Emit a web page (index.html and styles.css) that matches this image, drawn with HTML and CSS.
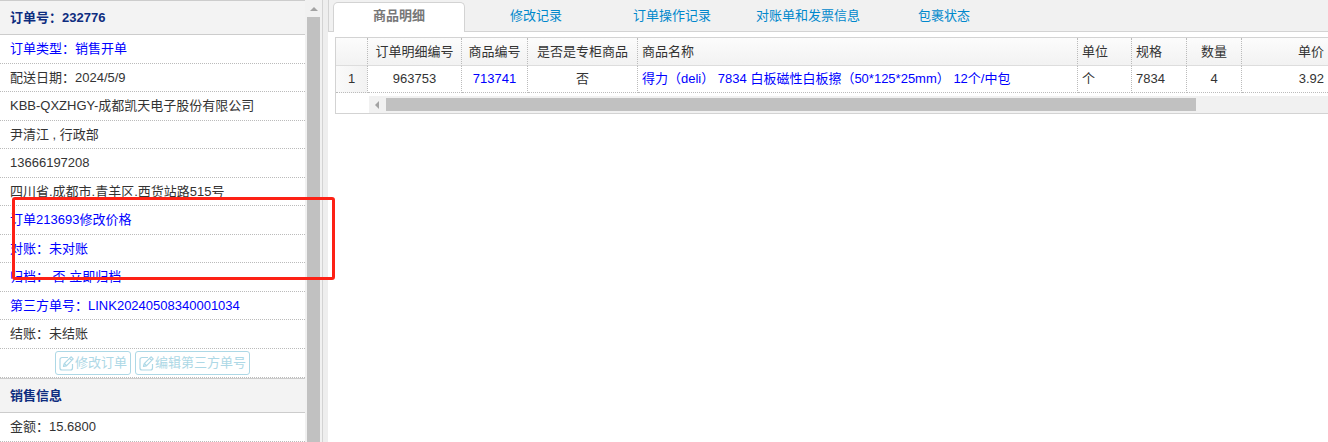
FILE: index.html
```html
<!DOCTYPE html>
<html lang="zh-CN">
<head>
<meta charset="utf-8">
<title>订单 232776</title>
<link rel="stylesheet" href="styles.css">
</head>
<body>
<svg class="sprite" aria-hidden="true">
  <symbol id="edit" viewBox="0 0 15 15">
    <path d="M9 1.500H3a2 2 0 0 0-2 2v8.500a2 2 0 0 0 2 2h8.500a2 2 0 0 0 2-2V8M4.500 10.500l.7-2.800 6.800-6.900 2.200 2.100-6.800 6.900zM5.600 7.700l1.900 1.900M10.600 2.300l2.100 2.100" fill="none" stroke="currentColor" stroke-width="1.200" stroke-linejoin="round"/>
  </symbol>
</svg>
<div class="layout">
  <aside class="side">
    <div class="side-content">
      <h2 class="side-title">订单号：232776</h2>
      <ul class="info">
        <li><a href="#">订单类型：销售开单</a></li>
        <li>配送日期：2024/5/9</li>
        <li>KBB-QXZHGY-成都凯天电子股份有限公司</li>
        <li>尹清江 , 行政部</li>
        <li>13666197208</li>
        <li>四川省.成都市.青羊区.西货站路515号</li>
        <li><a href="#">订单213693修改价格</a></li>
        <li><a href="#">对账：未对账</a></li>
        <li><a href="#">归档： 否</a> <a href="#">立即归档</a></li>
        <li><a href="#">第三方单号：LINK20240508340001034</a></li>
        <li>结账：未结账</li>
        <li class="actions">
          <button type="button" class="btn"><svg class="icon"><use href="#edit"/></svg>修改订单</button>
          <button type="button" class="btn"><svg class="icon"><use href="#edit"/></svg>编辑第三方单号</button>
        </li>
      </ul>
      <h2 class="side-title">销售信息</h2>
      <ul class="info">
        <li>金额：15.6800</li>
      </ul>
    </div>
    <div class="vbar"><span class="arrow-up"></span><span class="vthumb"></span></div>
  </aside>
  <div class="splitter"></div>
  <main class="main">
    <nav class="tabs">
      <a href="#" class="tab active">商品明细</a>
      <a href="#" class="tab">修改记录</a>
      <a href="#" class="tab">订单操作记录</a>
      <a href="#" class="tab">对账单和发票信息</a>
      <a href="#" class="tab">包裹状态</a>
    </nav>
    <section class="grid">
      <table class="items">
        <colgroup>
          <col class="c-row"><col class="c-id"><col class="c-sku"><col class="c-flag"><col><col class="c-unit"><col class="c-spec"><col class="c-qty"><col class="c-price">
        </colgroup>
        <thead>
          <tr>
            <th></th><th>订单明细编号</th><th>商品编号</th><th>是否是专柜商品</th><th class="left">商品名称</th><th class="left">单位</th><th class="left">规格</th><th>数量</th><th class="right">单价</th>
          </tr>
        </thead>
        <tbody>
          <tr>
            <td class="num">1</td><td>963753</td><td><a href="#">713741</a></td><td>否</td><td class="left"><a href="#">得力（deli） 7834 白板磁性白板擦（50*125*25mm） 12个/中包</a></td><td class="left">个</td><td class="left">7834</td><td>4</td><td class="right">3.92</td>
          </tr>
        </tbody>
      </table>
      <div class="hbar"><span class="arrow-left"></span><span class="hthumb"></span></div>
    </section>
  </main>
</div>
<div class="highlight"></div>
</body>
</html>
```
FILE: styles.css
```css
* {
  box-sizing: border-box;
}

body {
  margin: 0;
  color: #333;
  background: #fff;
  font: 13px/20px "Liberation Sans", "Noto Sans CJK SC", sans-serif;
}

a {
  color: #00f;
  text-decoration: none;
}

.sprite {
  position: absolute;
  width: 0;
  height: 0;
}

.layout {
  display: flex;
  height: 100vh;
  overflow: hidden;
}

/* Order summary */
.side {
  display: flex;
  flex: 0 0 323px;
  border-right: 1px solid #d3d3d3;
}

.side-content {
  flex: 1;
  overflow: hidden;
}

.side-title {
  margin: 0;
  padding: 7px 10px 6px;
  border: solid #ccc;
  border-width: 1px 0;
  color: #0e2d7f;
  background: #f3f3f3;
  font-size: 13px;
  line-height: 20px;
}

.info {
  margin: 0;
  padding: 0;
  list-style: none;
}

.info li {
  height: 29px;
  padding: 4px 10px 3px;
  border-bottom: 1px dotted #bbb;
  white-space: nowrap;
}

.info li:nth-child(even) {
  height: 28px;
}

.info .actions,
.info .actions:nth-child(even) {
  display: flex;
  justify-content: center;
  gap: 4px;
  height: 29px;
  padding: 2px 0;
}

.btn {
  display: flex;
  align-items: center;
  height: 24px;
  padding: 0 3px;
  border: 1px solid #add8e6;
  border-radius: 3px;
  color: #add8e6;
  background: #fff;
  font: inherit;
}

.icon {
  width: 15px;
  height: 15px;
  margin-right: 1px;
}

.vbar {
  display: flex;
  flex: 0 0 17px;
  flex-direction: column;
  align-items: center;
  padding: 7px 2px 0;
  background: #f1f1f1;
}

.arrow-up {
  margin-bottom: 6px;
  border: 4px solid transparent;
  border-top: 0;
  border-bottom-color: #a3a3a3;
}

.vthumb {
  flex: 1;
  width: 13px;
  background: #c1c1c1;
}

.splitter {
  flex: 0 0 5px;
  background: #eee;
}

/* Tabs and item grid */
.main {
  flex: 1;
  min-width: 0;
}

.tabs {
  display: flex;
  gap: 4px;
  height: 32px;
  padding: 2px 5px 0;
  border: solid #d3d3d3;
  border-width: 0 0 1px 1px;
  background: #f1f1f1;
}

.tab {
  flex: 0 0 132px;
  padding: 4px 0;
  color: #08c;
  text-align: center;
}

.tab.active {
  height: 30px;
  margin: 0 1px 0 -1px;
  padding-top: 3px;
  border: 1px solid #d3d3d3;
  border-bottom: 0;
  border-radius: 5px 5px 0 0;
  color: #777;
  background: #fff;
  font-weight: bold;
}

.grid {
  margin: 5px 0 0 7px;
  border: solid #d3d3d3;
  border-width: 1px 0 1px 1px;
}

.items {
  width: 100%;
  border-spacing: 0;
  table-layout: fixed;
}

.c-row { width: 32px; }
.c-id { width: 94px; }
.c-sku { width: 66px; }
.c-flag { width: 110px; }
.c-unit { width: 54px; }
.c-spec,
.c-qty { width: 55px; }
.c-price { width: 86px; }

.items th,
.items td {
  padding: 3px 4px;
  border-right: 1px dotted #bbb;
  border-bottom: 1px dotted #bbb;
  font-weight: normal;
  text-align: center;
  white-space: nowrap;
}

.items th {
  padding: 4px 4px 3px;
  border-bottom: 1px solid #ddd;
  background: linear-gradient(#fcfcfc, #f2f2f2);
}

.items .num {
  background: linear-gradient(90deg, #fafafa, #f2f2f2);
}

.items .left {
  text-align: left;
}

.items .right {
  border-right: 0;
  text-align: right;
}

.hbar {
  display: flex;
  align-items: center;
  height: 17px;
  margin: 3px 0 0 33px;
  padding-left: 6px;
  background: #f1f1f1;
}

.arrow-left {
  margin-right: 7px;
  border: 4px solid transparent;
  border-left: 0;
  border-right-color: #a3a3a3;
}

.hthumb {
  flex: 0 0 auto;
  width: 85%;
  height: 13px;
  background: #c1c1c1;
}

/* Callout frame over the order note */
.highlight {
  position: absolute;
  top: 197px;
  left: 12px;
  width: 323px;
  height: 83px;
  border: 3px solid #fd2115;
  border-radius: 3px;
  pointer-events: none;
}
```
